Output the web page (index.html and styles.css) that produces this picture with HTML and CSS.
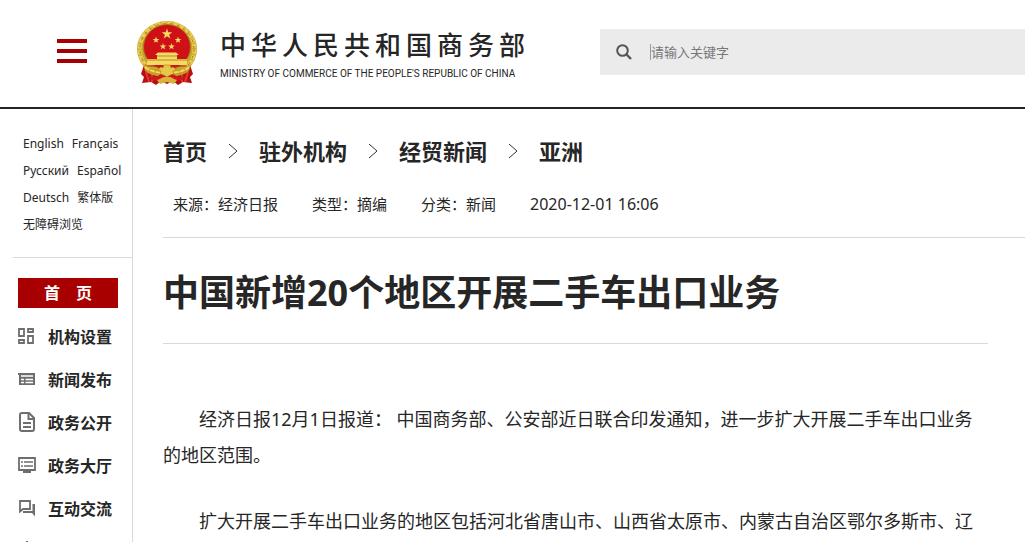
FILE: index.html
```html
<!DOCTYPE html>
<html lang="zh-CN">
<head>
<meta charset="utf-8">
<meta name="viewport" content="width=device-width, initial-scale=1">
<title>中国新增20个地区开展二手车出口业务</title>
<link rel="stylesheet" href="styles.css">
</head>
<body>
<header class="site-header">
  <button class="menu-toggle" type="button" aria-label="菜单"><span></span><span></span><span></span></button>
  <a class="brand" href="#">
    <svg class="emblem" viewBox="0 0 62 66" aria-hidden="true">
      <defs>
        <path id="star" d="M0-5 1.2-1.6 4.8-1.6 1.9.6 3 4.1 0 2-3 4.1-1.9.6-4.8-1.6-1.2-1.6Z"/>
      </defs>
      <path d="M9 42 5 54l3 3-2 6 9-1 5 3 5-4 6 3 6-3 5 4 5-3 9 1-2-6 3-3-4-12Z" fill="#b80f14"/>
      <path d="M10 52l3 10M16 53v9M52 52l-3 10M46 53v9" stroke="#e33a2b" stroke-width="2"/>
      <ellipse cx="31" cy="29" rx="30" ry="28" fill="#c9a42c"/>
      <ellipse cx="31" cy="29" rx="27.500" ry="26" fill="none" stroke="#e6cb55" stroke-width="4" stroke-dasharray="5 1"/>
      <ellipse cx="31" cy="29" rx="27" ry="25.500" fill="none" stroke="#a8821f" stroke-width="1" stroke-dasharray="3 4"/>
      <ellipse cx="31" cy="27" rx="23.500" ry="22.500" fill="#cf1117" stroke="#a87b15"/>
      <g fill="#f4da62">
        <use href="#star" transform="translate(31 14) scale(1.1)"/>
        <use href="#star" transform="translate(20 20) scale(.7)"/>
        <use href="#star" transform="translate(42 20) scale(.7)"/>
        <use href="#star" transform="translate(27 26.500) scale(.7)"/>
        <use href="#star" transform="translate(35.500 26.500) scale(.7)"/>
        <path d="M19 35 22 32.500h18l3 2.500ZM21 35h20v4H21ZM11 39h40v6H11Z"/>
      </g>
      <path d="M11 40h40M21 36h20" stroke="#b68b24"/>
      <path d="M11 46h40" stroke="#c22018"/>
      <path d="M7 43c6 10 42 10 48 0l-2 8c-10 8-34 8-44 0Z" fill="#c79c26"/>
      <path d="M9 47c8 8 36 8 44 0" fill="none" stroke="#f1d961" stroke-width="2" stroke-dasharray="5 1"/>
      <path d="M22 50l3-3 2 1 1-3h6l1 3 2-1 3 3-3 1 1 3-4 1-3 2-3-2-4-1 1-3Z" fill="#e7c747" stroke="#b88e25" stroke-width=".7"/>
      <path d="M11 56l9 1 5-3 6 3 6-3 5 3 9-1-5 4-8 1-7-2-7 2-8-1Z" fill="#ce1a1c"/>
      <path d="M24 59c4-3 10-3 14 0l3 1-3 4-7-2-7 2-3-4Z" fill="#d9b43a"/>
    </svg>
    <span class="brand-text">
      <span class="brand-cn">中华人民共和国商务部</span>
      <span class="brand-en">MINISTRY OF COMMERCE OF THE PEOPLE'S REPUBLIC OF CHINA</span>
    </span>
  </a>
  <form class="search" role="search">
    <button class="search-btn" type="submit" aria-label="搜索">
      <svg viewBox="0 0 16 16" width="16" height="16"><circle cx="6.500" cy="6.500" r="5.300" fill="none" stroke="currentColor" stroke-width="2"/><path d="m10.500 10.500 4.500 4.500" stroke="currentColor" stroke-width="2.400"/></svg>
    </button>
    <input class="search-input" type="text" placeholder="请输入关键字" aria-label="请输入关键字">
  </form>
</header>
<div class="page">
  <aside class="sidebar">
    <nav class="langs" aria-label="语言">
      <a href="#">English</a><a href="#">Français</a>
      <a href="#">Русский</a><a href="#">Español</a>
      <a href="#">Deutsch</a><a href="#">繁体版</a>
      <a href="#">无障碍浏览</a>
    </nav>
    <nav class="menu" aria-label="主导航">
      <a class="home" href="#"><span>首</span><span>页</span></a>
      <a class="item" href="#">
        <svg viewBox="0 0 18 18"><path d="M1 2h5v7H1ZM10 2h5v3h-5ZM1 13h5v3H1ZM10 9h5v7h-5Z" fill="none" stroke="currentColor" stroke-width="1.800"/></svg>
        机构设置</a>
      <a class="item" href="#">
        <svg viewBox="0 0 18 18"><path d="M0 3h17v12H1V5H0Z" fill="currentColor"/><path d="M3 6h12M3 9.500h3M7.500 9.500H15M3 12.500h3M7.500 12.500H15" stroke="#fff" stroke-width="1.300"/></svg>
        新闻发布</a>
      <a class="item" href="#">
        <svg class="tall" viewBox="0 0 18 20"><path d="M4 1h7l5 5v11q0 2-2 2H4q-2 0-2-2V3q0-2 2-2Z" fill="none" stroke="currentColor" stroke-width="2"/><path d="M10.500 1v6H16M5 11h8M5 15h8" fill="none" stroke="currentColor" stroke-width="2"/></svg>
        政务公开</a>
      <a class="item" href="#">
        <svg viewBox="0 0 18 18"><path d="M1 2h16v12H1Z" fill="none" stroke="currentColor" stroke-width="1.800"/><path d="M5 14.500h8V17H5Z" fill="currentColor"/><path d="M3 6h2M6 6h9M3 10h2M6 10h9" stroke="currentColor" stroke-width="1.600"/></svg>
        政务大厅</a>
      <a class="item" href="#">
        <svg viewBox="0 0 18 18"><path d="M2 2h10v8H5l-3 2.500Z" fill="none" stroke="currentColor" stroke-width="1.800"/><path d="M14.500 5H17v12.500L14 14H5v-2h9.500Z" fill="currentColor"/></svg>
        互动交流</a>
      <a class="item" href="#" aria-label="公共服务">
        <svg class="tall" viewBox="0 0 18 20"><path d="m9 0 2.500 7 5.500.5-4 4 1 6-5-3-5 3 1-6-4-4L6.500 7Z" fill="none" stroke="currentColor" stroke-width="1.600"/></svg>
      </a>
    </nav>
  </aside>
  <main class="main">
    <nav class="crumbs" aria-label="面包屑">
      <a href="#">首页</a>
      <svg viewBox="0 0 10 16"><path d="m1 1 8 7-8 7"/></svg>
      <a href="#">驻外机构</a>
      <svg viewBox="0 0 10 16"><path d="m1 1 8 7-8 7"/></svg>
      <a href="#">经贸新闻</a>
      <svg viewBox="0 0 10 16"><path d="m1 1 8 7-8 7"/></svg>
      <a href="#">亚洲</a>
    </nav>
    <div class="meta">
      <span>来源：经济日报</span>
      <span>类型：摘编</span>
      <span>分类：新闻</span>
      <time datetime="2020-12-01T16:06">2020-12-01 16:06</time>
    </div>
    <article class="article">
      <h1>中国新增20个地区开展二手车出口业务</h1>
      <div class="content">
        <p>经济日报12月1日报道： 中国商务部、公安部近日联合印发通知，进一步扩大开展二手车出口业务的地区范围。</p>
        <p>扩大开展二手车出口业务的地区包括河北省唐山市、山西省太原市、内蒙古自治区鄂尔多斯市、辽</p>
      </div>
    </article>
  </main>
</div>
</body>
</html>
```
FILE: styles.css
```css
* { box-sizing: border-box; }

body {
  display: flex;
  flex-direction: column;
  height: 100vh;
  margin: 0;
  overflow: hidden;
  background: #fff;
  color: #262626;
  font-family: "Noto Sans", "Noto Sans CJK SC", sans-serif;
}

a { color: inherit; text-decoration: none; }

button { padding: 0; border: 0; background: none; }

.site-header {
  display: flex;
  flex: none;
  align-items: center;
  padding: 20px 0 21px 57px;
  border-bottom: 2px solid #222528;
}

.menu-toggle {
  display: flex;
  flex-direction: column;
  gap: 6px;
  width: 30px;
  margin: 0 49px 4px 0;
}

.menu-toggle span { width: 100%; height: 4px; background: #a80000; }

.brand { display: flex; flex: none; align-items: center; gap: 22px; }

.emblem { width: 62px; height: 66px; }

.brand-text {
  display: flex;
  flex-direction: column;
  gap: 2px;
  width: 308px;
  padding-top: 3px;
}

.brand-cn {
  font-size: 26px;
  font-weight: 500;
  line-height: 36px;
  letter-spacing: 5px;
  white-space: nowrap;
}

.brand-en {
  font-family: Roboto, "Liberation Sans", sans-serif;
  font-size: 10px;
  line-height: 18px;
  white-space: nowrap;
}

.search {
  display: flex;
  flex: 1;
  align-items: center;
  gap: 18px;
  height: 46px;
  margin: 0 0 2px 72px;
  padding-left: 16px;
  background: #ebebeb;
}

.search-btn { display: flex; color: #555; }

.search-input {
  flex: 1;
  min-width: 0;
  height: 16px;
  padding: 0;
  border: 0;
  border-left: 1px solid #999;
  outline: 0;
  background: none;
  font: 13px/16px "Noto Sans", "Noto Sans CJK SC", sans-serif;
}

.search-input::placeholder { color: #777; opacity: 1; }

.page { display: flex; flex: 1; min-height: 0; }

.sidebar {
  flex: none;
  width: 133px;
  overflow: hidden;
  border-right: 1px solid #d9d9d9;
}

.langs {
  display: flex;
  flex-wrap: wrap;
  column-gap: 8px;
  margin-left: 13px;
  padding: 21px 0 19px 10px;
  border-bottom: 1px solid #d9d9d9;
  font-size: 12px;
  line-height: 27px;
}

.menu { padding: 20px 14px 0 18px; }

.home {
  display: flex;
  justify-content: center;
  gap: 16px;
  margin-bottom: 6px;
  background: #a80000;
  color: #fff;
  font-size: 16px;
  font-weight: 700;
  line-height: 30px;
}

.item {
  display: flex;
  align-items: center;
  gap: 12px;
  height: 43px;
  font-size: 16px;
  font-weight: 700;
  white-space: nowrap;
}

.item svg { flex: none; width: 18px; height: 18px; color: #6e6e6e; }
.item .tall { height: 20px; }

.main { flex: 1; min-width: 0; padding-left: 30px; }

.crumbs {
  display: flex;
  align-items: center;
  gap: 21px;
  padding-top: 26px;
  font-size: 22px;
  font-weight: 700;
  line-height: 32px;
}

.crumbs svg { width: 10px; height: 16px; fill: none; stroke: #333; }

.meta {
  display: flex;
  align-items: center;
  gap: 34px;
  padding: 23px 10px 19px;
  border-bottom: 1px solid #d9d9d9;
  font-size: 15px;
  line-height: 28px;
}

.meta time { font-size: 16px; }

.article { padding-right: 37px; }

h1 {
  margin: 0 0 57px;
  padding: 30px 0 25px;
  border-bottom: 1px solid #d9d9d9;
  font-size: 36px;
  font-weight: 700;
  line-height: 50px;
}

.content { font-size: 18px; line-height: 36px; }

.content p { margin: 0 0 30px; text-indent: 2em; }
```
